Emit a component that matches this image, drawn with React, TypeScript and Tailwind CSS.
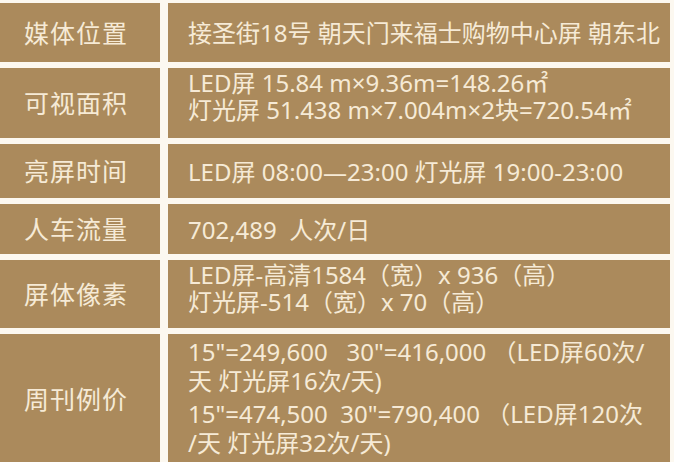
import React from "react";

type Row = {
  label: string;
  paras: string[][];
  height: string;
  pad?: string;
};

const rows: Row[] = [
  { label: "媒体位置", paras: [["接圣街18号 朝天门来福士购物中心屏 朝东北"]], height: "h-[59px]" },
  {
    label: "可视面积",
    paras: [["LED屏 15.84 m×9.36m=148.26㎡", "灯光屏 51.438 m×7.004m×2块=720.54㎡"]],
    height: "h-[70px]",
    pad: "pt-[1px]",
  },
  { label: "亮屏时间", paras: [["LED屏 08:00—23:00 灯光屏 19:00-23:00"]], height: "h-[54px]" },
  { label: "人车流量", paras: [["702,489  人次/日"]], height: "h-[50px]" },
  {
    label: "屏体像素",
    paras: [["LED屏-高清1584（宽）x 936（高）", "灯光屏-514（宽）x 70（高）"]],
    height: "h-[68px]",
    pad: "pt-[1px]",
  },
  {
    label: "周刊例价",
    paras: [
      ["15\"=249,600   30\"=416,000 （LED屏60次/", "天 灯光屏16次/天)"],
      ["15\"=474,500  30\"=790,400 （LED屏120次", "/天 灯光屏32次/天)"],
    ],
    height: "h-[130px]",
    pad: "pt-[3px]",
  },
];

const font = { fontFamily: '"Noto Sans", "Noto Sans CJK SC", sans-serif' };
const labelFont = { fontFamily: '"Noto Sans CJK SC", sans-serif' };

export default function App() {
  return (
    <div
      className="h-[462px] w-[674px] overflow-hidden bg-[#fcf8f0] pt-[3px] pr-[4px] text-[#f6ead6]"
      style={font}
    >
      <div className="flex flex-col gap-[6px]">
        {rows.map((row) => (
          <div key={row.label} className={`flex gap-[8px] ${row.height}`}>
            <div
              className="flex w-[160px] shrink-0 items-center justify-center bg-[#ab8a5c] pr-[8px] text-[25px] tracking-[1px]"
              style={labelFont}
            >
              {row.label}
            </div>
            <div
              className={`flex flex-1 flex-col bg-[#ab8a5c] pl-[20px] text-[24px] ${
                row.pad ? `justify-start ${row.pad}` : "justify-center"
              }`}
            >
              {row.paras.map((para, i) => (
                <div
                  key={i}
                  className={`whitespace-pre ${row.pad === "pt-[3px]" ? "leading-[29px]" : "leading-[27px]"} ${
                    i > 0 ? "mt-[4px]" : ""
                  }`}
                >
                  {para.map((l, j) => (
                    <div key={j}>{l}</div>
                  ))}
                </div>
              ))}
            </div>
          </div>
        ))}
      </div>
    </div>
  );
}
